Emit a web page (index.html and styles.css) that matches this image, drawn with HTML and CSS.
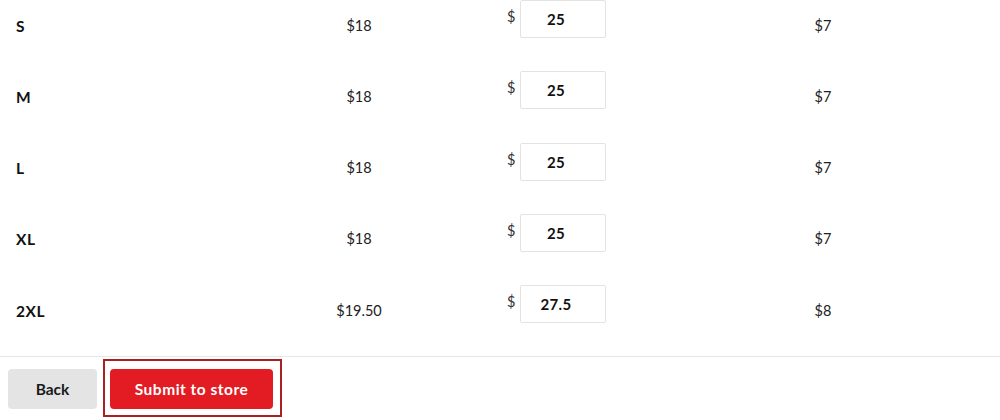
FILE: index.html
```html
<!DOCTYPE html>
<html>
<head>
<meta charset="utf-8">
<link rel="stylesheet" href="styles.css">
</head>
<body>
<div class="page">
  <div class="table">
    <div class="row">
      <div class="c size">S</div>
      <div class="c price">$18</div>
      <div class="c your"><span class="cur">$</span><input class="amt" value="25"></div>
      <div class="c fee">$7</div>
    </div>
    <div class="row">
      <div class="c size">M</div>
      <div class="c price">$18</div>
      <div class="c your"><span class="cur">$</span><input class="amt" value="25"></div>
      <div class="c fee">$7</div>
    </div>
    <div class="row">
      <div class="c size">L</div>
      <div class="c price">$18</div>
      <div class="c your"><span class="cur">$</span><input class="amt" value="25"></div>
      <div class="c fee">$7</div>
    </div>
    <div class="row">
      <div class="c size">XL</div>
      <div class="c price">$18</div>
      <div class="c your"><span class="cur">$</span><input class="amt" value="25"></div>
      <div class="c fee">$7</div>
    </div>
    <div class="row">
      <div class="c size">2XL</div>
      <div class="c price">$19.50</div>
      <div class="c your"><span class="cur">$</span><input class="amt" value="27.5"></div>
      <div class="c fee">$8</div>
    </div>
  </div>
  <div class="footer">
    <button class="btn back">Back</button>
    <div class="focus-ring"><button class="btn submit">Submit to store</button></div>
  </div>
</div>
</body>
</html>
```
FILE: styles.css
```css
* { box-sizing: border-box; }
html, body { margin: 0; padding: 0; background: #fff; }
body {
  font-family: Lato, "Open Sans", Arial, sans-serif;
  color: #222;
  font-size: 14px;
  overflow: hidden;
}
.page { width: 1000px; height: 420px; overflow: hidden; }
.table {
  margin-top: -10.65px;
  padding-bottom: 10.5px;
}
.row {
  display: grid;
  grid-template-columns: 240px 238px 227px 236px;
  height: 71.3px;
  align-items: center;
}
.c { line-height: 18px; padding-top: 1px; }
.size {
  padding-left: 16px;
  font-weight: 700;
  font-size: 15.5px;
  letter-spacing: 0.6px;
  color: #111;
}
.price { text-align: center; font-size: 14.5px; }
.fee { text-align: center; font-size: 14.5px; }
.your {
  display: flex;
  align-items: flex-start;
  padding-left: 29px;
  padding-top: 0;
  padding-bottom: 12px;
}
.cur {
  font-size: 14.5px;
  margin-top: 8px;
  width: 13px;
  color: #333;
}
.amt {
  width: 86px;
  height: 38px;
  border: 1px solid #e3e3e3;
  border-radius: 2px;
  padding: 0 14px 0 0;
  text-align: center;
  font-family: Lato, Arial, sans-serif;
  font-weight: 700;
  font-size: 15px;
  letter-spacing: 0.3px;
  color: #111;
  background: #fff;
}
.footer {
  border-top: 1px solid #e6e6e6;
  display: flex;
  align-items: flex-start;
  padding: 2px 0 0 8px;
  gap: 6px;
}
.btn {
  font-family: Lato, Arial, sans-serif;
  font-weight: 700;
  font-size: 15.5px;
  border: none;
  border-radius: 4px;
  height: 40px;
  cursor: pointer;
}
.back {
  width: 89px;
  margin-top: 10px;
  background: #e4e4e4;
  color: #1a1a1a;
}
.focus-ring {
  border: 2px solid #a8201f;
  padding: 8px 7px 6px 5px;
}
.submit {
  width: 163px;
  display: block;
  background: #e31b23;
  color: #fff;
  letter-spacing: 0.5px;
}
```
